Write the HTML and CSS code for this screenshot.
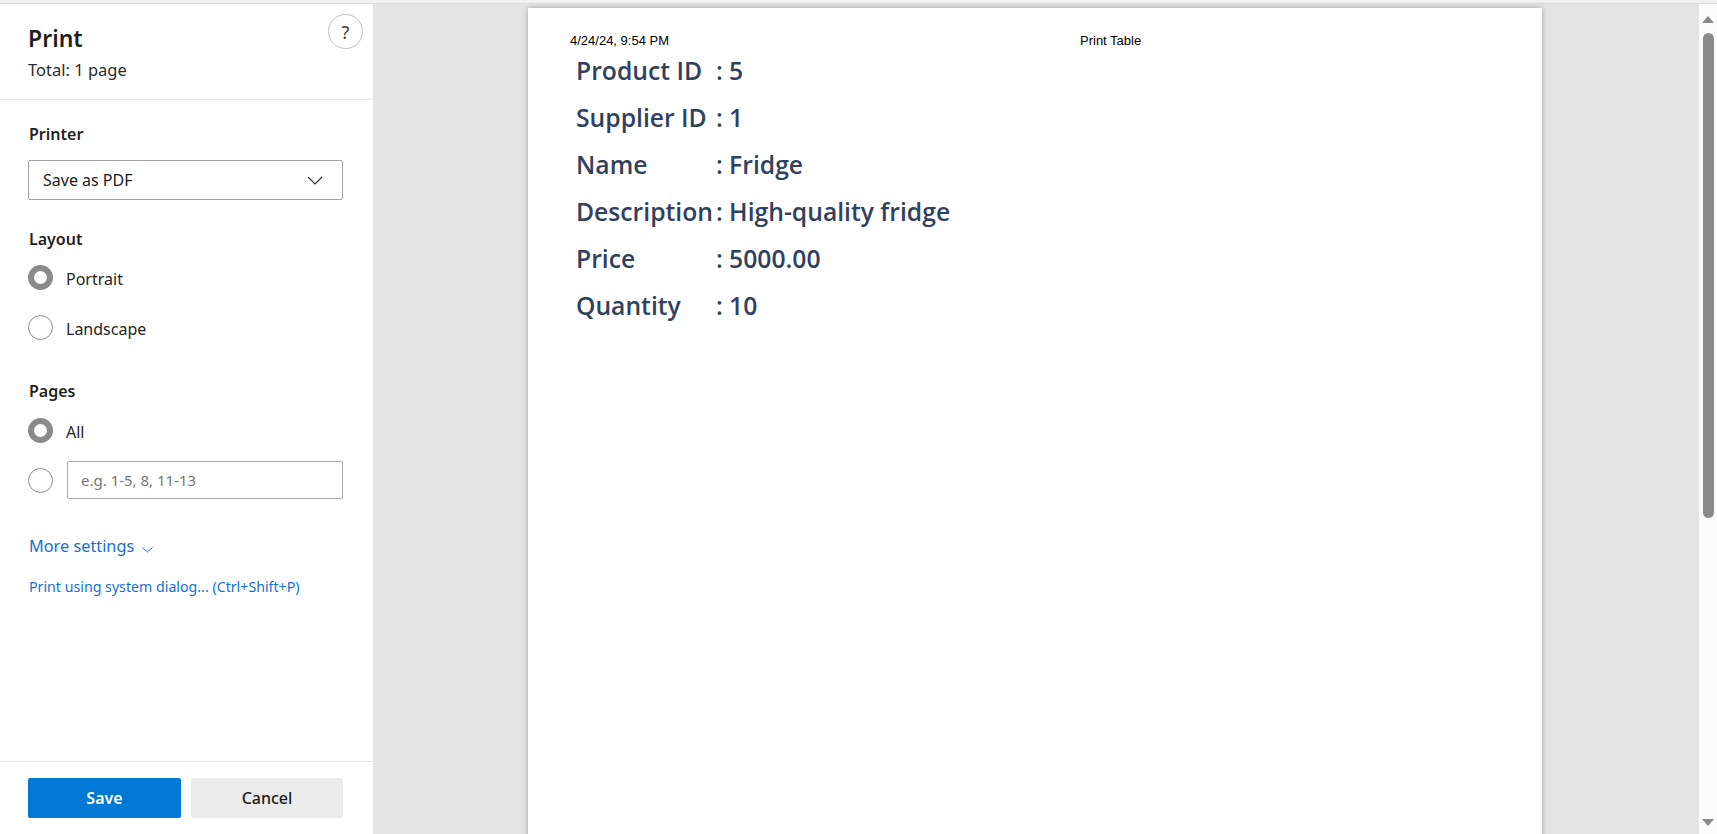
FILE: index.html
```html
<!DOCTYPE html>
<html lang="en">
<head>
<meta charset="utf-8">
<title>Print</title>
<link rel="stylesheet" href="styles.css">
</head>
<body>
<div class="topbar"></div>
<div class="main">
  <aside class="sidebar">
    <header class="side-head">
      <div class="titles">
        <h1 class="title">Print</h1>
        <div class="total">Total: 1 page</div>
      </div>
      <button class="help" type="button">?</button>
    </header>
    <div class="settings">
      <div class="label label-printer">Printer</div>
      <div class="select">
        <span>Save as PDF</span>
        <svg class="chev" width="16" height="9" viewBox="0 0 16 9"><polyline points="1,1 8,8 15,1" fill="none" stroke="#333" stroke-width="1.2"/></svg>
      </div>
      <div class="label label-layout">Layout</div>
      <div class="radios radios-layout">
        <div class="radio-row"><span class="radio checked"></span><span class="radio-text">Portrait</span></div>
        <div class="radio-row"><span class="radio"></span><span class="radio-text">Landscape</span></div>
      </div>
      <div class="label label-pages">Pages</div>
      <div class="radios radios-pages">
        <div class="radio-row"><span class="radio checked"></span><span class="radio-text">All</span></div>
        <div class="radio-row"><span class="radio"></span><div class="range-input">e.g. 1-5, 8, 11-13</div></div>
      </div>
      <div class="more">More settings
        <svg class="more-chev" width="11" height="6" viewBox="0 0 11 6"><polyline points="0.5,0.5 5.5,5 10.5,0.5" fill="none" stroke="#1570d0" stroke-width="1"/></svg>
      </div>
      <div class="sysdialog">Print using system dialog... (Ctrl+Shift+P)</div>
    </div>
    <footer class="side-foot">
      <button class="btn btn-save" type="button">Save</button>
      <button class="btn btn-cancel" type="button">Cancel</button>
    </footer>
  </aside>
  <section class="preview">
    <div class="page">
      <div class="page-header">
        <span class="ph-date">4/24/24, 9:54 PM</span>
        <span class="ph-title">Print Table</span>
      </div>
      <table class="details">
        <tr><td class="k">Product ID</td><td class="v">: 5</td></tr>
        <tr><td class="k">Supplier ID</td><td class="v">: 1</td></tr>
        <tr><td class="k">Name</td><td class="v">: Fridge</td></tr>
        <tr><td class="k">Description</td><td class="v">: High-quality fridge</td></tr>
        <tr><td class="k">Price</td><td class="v">: 5000.00</td></tr>
        <tr><td class="k">Quantity</td><td class="v">: 10</td></tr>
      </table>
    </div>
  </section>
  <div class="scrollbar">
    <svg class="sb-up" width="12" height="10" viewBox="0 0 12 10"><polygon points="0,9 6,2 12,9" fill="#8a8a8a"/></svg>
    <div class="sb-thumb"></div>
    <svg class="sb-down" width="12" height="10" viewBox="0 0 12 10"><polygon points="0,1 12,1 6,8" fill="#8a8a8a"/></svg>
  </div>
</div>
</body>
</html>
```
FILE: styles.css
```css
* { box-sizing: border-box; }
html, body {
  margin: 0;
  padding: 0;
  width: 1717px;
  height: 834px;
  overflow: hidden;
  background: #e4e4e4;
  font-family: "Noto Sans", "Open Sans", sans-serif;
}
.topbar {
  height: 4px;
  background: #f1f1f1;
  border-bottom: 1px solid #d9d9d9;
}
.main {
  display: flex;
  height: 830px;
}

/* Sidebar */
.sidebar {
  width: 373px;
  flex: none;
  background: #fff;
  display: flex;
  flex-direction: column;
  color: #242424;
}
.side-head {
  height: 96px;
  border-bottom: 1px solid #e5e5e5;
  display: flex;
  justify-content: space-between;
  align-items: flex-start;
  padding: 18px 10px 0 28px;
}
.title {
  margin: 0;
  font-size: 23px;
  line-height: 32px;
  font-weight: 600;
  color: #1f1f1f;
}
.total {
  margin-top: 6px;
  font-size: 16.5px;
  line-height: 20px;
  color: #2a2a2a;
}
.help {
  margin-top: -8px;
  width: 35px;
  height: 35px;
  border-radius: 50%;
  border: 1px solid #c2c2c2;
  background: #fff;
  font-family: "Noto Sans", sans-serif;
  font-size: 18px;
  line-height: 1;
  color: #3a3a3a;
  padding: 0;
  display: flex;
  align-items: center;
  justify-content: center;
}
.settings {
  flex: 1;
  padding: 0 30px 0 28px;
  display: flex;
  flex-direction: column;
}
.label {
  font-size: 16px;
  font-weight: 600;
  line-height: 22px;
  color: #1f1f1f;
  padding-left: 1px;
}
.label-printer { margin-top: 23px; }
.label-layout { margin-top: 28px; }
.label-pages { margin-top: 28px; }
.select {
  margin-top: 15px;
  height: 40px;
  border: 1px solid #a3a3a3;
  border-radius: 2px;
  display: flex;
  align-items: center;
  justify-content: space-between;
  padding: 0 19px 0 14px;
  font-size: 16px;
  color: #1b1b1b;
}
.chev { display: block; }
.radios { display: flex; flex-direction: column; }
.radios-layout { margin-top: 2px; }
.radios-pages { margin-top: 3px; }
.radio-row {
  height: 50px;
  display: flex;
  align-items: center;
  gap: 13px;
}
.radio {
  width: 25px;
  height: 25px;
  flex: none;
  border-radius: 50%;
  border: 1px solid #8d8d8d;
  background: #fff;
}
.radio.checked {
  border: 6.5px solid #8a8a8a;
}
.radio-text {
  font-size: 16px;
  line-height: 20px;
  padding-top: 4px;
  color: #242424;
}
.range-input {
  flex: 1;
  margin-left: 1px;
  height: 38px;
  border: 1px solid #acacac;
  border-radius: 2px;
  display: flex;
  align-items: center;
  padding-left: 13px;
  font-size: 15px;
  color: #777;
}
.more {
  margin-top: 30px;
  font-size: 16.3px;
  line-height: 22px;
  color: #1570d0;
  padding-left: 1px;
  display: flex;
  align-items: center;
  gap: 8px;
}
.more-chev { margin-top: 7px; }
.sysdialog {
  margin-top: 20px;
  font-size: 14.2px;
  line-height: 19px;
  color: #1570d0;
  padding-left: 1px;
}
.side-foot {
  height: 73px;
  border-top: 1px solid #e5e5e5;
  display: flex;
  gap: 10px;
  padding: 16px 30px 0 28px;
}
.btn {
  height: 40px;
  border: none;
  border-radius: 2px;
  font-family: "Noto Sans", sans-serif;
  font-size: 16px;
  font-weight: 600;
}
.btn-save { width: 153px; background: #0078d4; color: #fff; }
.btn-cancel { width: 152px; background: #ebebeb; color: #1b1b1b; font-weight: 500; }

/* Preview */
.preview {
  flex: 1;
  background: #e4e4e4;
  overflow: hidden;
}
.page {
  margin: 4px 0 0 155px;
  width: 1014px;
  height: 900px;
  background: #fff;
  box-shadow: 0 0 5px rgba(0, 0, 0, 0.3);
}
.page-header {
  display: grid;
  grid-template-columns: 510px auto;
  padding: 25px 0 0 42px;
  font-family: "Liberation Sans", Arial, sans-serif;
  font-size: 13px;
  line-height: 15px;
  color: #000;
}
.details {
  margin: 0 0 0 48px;
  border-collapse: collapse;
  font-family: "Open Sans", "Noto Sans", sans-serif;
  font-weight: 600;
  font-size: 24.7px;
  line-height: 46.9px;
  color: #30415f;
}
.details td { padding: 0; white-space: nowrap; }
.details td.v { padding-left: 3px; }

/* Scrollbar */
.scrollbar {
  width: 18px;
  flex: none;
  background: #fbfbfb;
  display: flex;
  flex-direction: column;
  align-items: center;
}
.sb-up { margin-top: 10px; display: block; }
.sb-thumb {
  margin-top: 9px;
  width: 11px;
  height: 485px;
  border-radius: 6px;
  background: #8b8b8b;
}
.sb-down { margin-top: auto; margin-bottom: 6px; display: block; }
```
